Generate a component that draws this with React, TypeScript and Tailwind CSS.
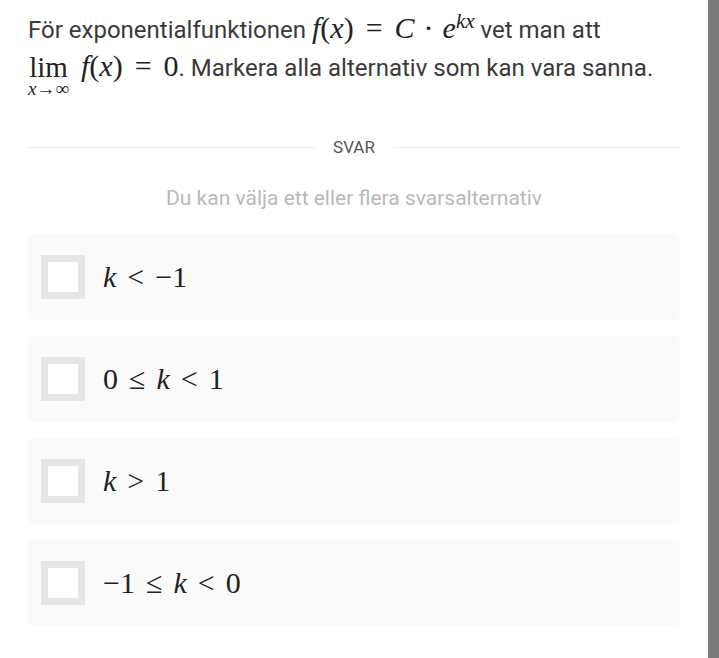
import React from "react";

const serif = "font-['Liberation_Serif','DejaVu_Serif',serif]";

function M({ children }: { children: React.ReactNode }) {
  return <span className={`${serif} text-[30px] leading-none text-[#222]`}>{children}</span>;
}

function V({ children }: { children: React.ReactNode }) {
  return <i className="italic">{children}</i>;
}

const options: React.ReactNode[] = [
  <>
    <V>k</V>
    <span className="mx-[11px]">&lt;</span>−1
  </>,
  <>
    0<span className="mx-[11px]">≤</span>
    <V>k</V>
    <span className="mx-[11px]">&lt;</span>1
  </>,
  <>
    <V>k</V>
    <span className="mx-[11px]">&gt;</span>1
  </>,
  <>
    −1<span className="mx-[11px]">≤</span>
    <V>k</V>
    <span className="mx-[11px]">&lt;</span>0
  </>,
];

export default function App() {
  return (
    <div className="flex h-[658px] w-[719px] bg-white font-['Roboto',sans-serif]">
      <main className="flex-1 px-[28px] pt-[10px]">
        <div className="text-[24px] leading-[40px] text-[#3a3a3a]">
          <div>
            För exponentialfunktionen{" "}
            <M>
              <V>f</V>(<V>x</V>)<span className="mx-[12px]">=</span>
              <V>C</V>
              <span className="mx-[9px]">·</span>
              <V>e</V>
              <sup className="text-[21px] italic">kx</sup>
            </M>{" "}
            vet man att
          </div>
          <div className="flex items-start">
            <span className="mr-[12px] inline-flex flex-col items-center pt-[2px]">
              <span className={`${serif} text-[29px] leading-[30px] text-[#222]`}>lim</span>
              <span className={`${serif} text-[19px] leading-[14px] text-[#222]`}>
                <i>x</i>→∞
              </span>
            </span>
            <span className="-mt-[2px]">
              <M>
                <V>f</V>(<V>x</V>)<span className="mx-[12px]">=</span>0
              </M>
              . Markera alla alternativ som kan vara sanna.
            </span>
          </div>
        </div>

        <div className="mt-[39px] flex items-center gap-[18px]">
          <div className="h-px flex-1 bg-[#ececec]" />
          <span className="text-[17px] text-[#555]">SVAR</span>
          <div className="h-px flex-1 bg-[#ececec]" />
        </div>

        <p className="mt-[22px] text-center text-[21px] text-[#b9b9b9]">
          Du kan välja ett eller flera svarsalternativ
        </p>

        <div className="mt-[20px] flex flex-col gap-[16px]">
          {options.map((o, i) => (
            <label
              key={i}
              className="flex h-[86px] items-center gap-[18px] rounded-[6px] bg-[#fafafa] px-[13px]"
            >
              <span className="h-[44px] w-[44px] border-[7px] border-[#e6e6e6] bg-white" />
              <M>{o}</M>
            </label>
          ))}
        </div>
      </main>
      <div className="w-[11px] bg-[#787878]" />
    </div>
  );
}
